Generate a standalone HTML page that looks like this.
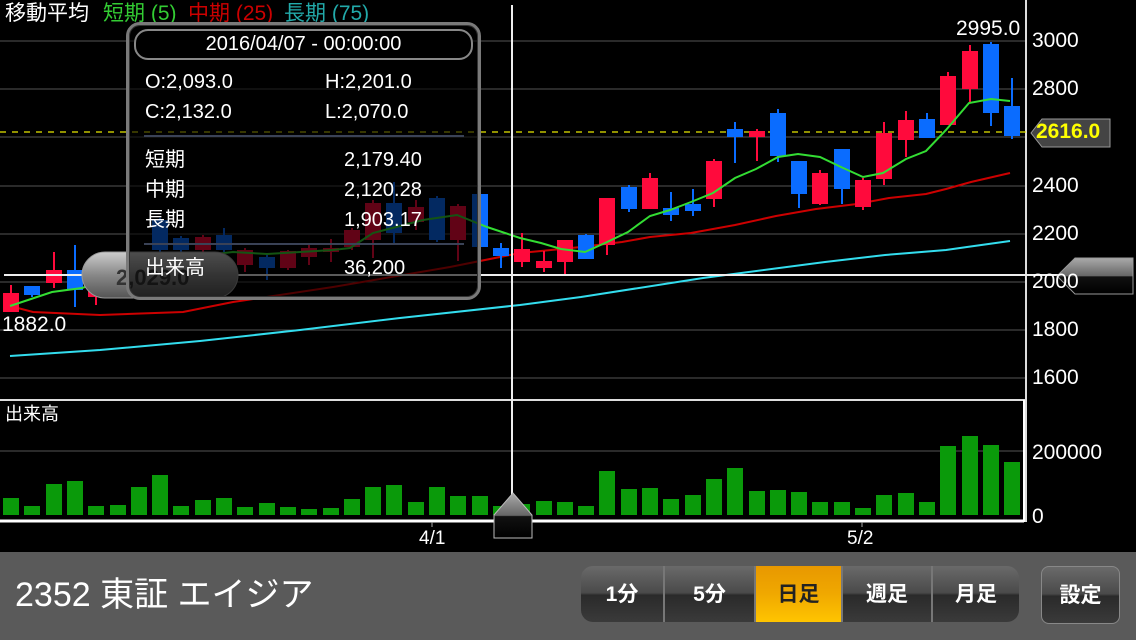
<!DOCTYPE html>
<html><head><meta charset="utf-8"><style>
*{margin:0;padding:0;box-sizing:border-box}
body{width:1136px;height:640px;background:#000;overflow:hidden;position:relative;font-family:"Liberation Sans","Noto Sans CJK JP",sans-serif;color:#fff}
svg{position:absolute;left:0;top:0}
.t{position:absolute;white-space:nowrap;line-height:1}
#ov{position:absolute;left:126px;top:22px;width:355px;height:278px;border-radius:14px;background:rgba(0,0,0,0.62);border:3px solid #7a7a7a;box-shadow:inset 0 0 0 1px #333}
#hd{position:absolute;left:5px;top:4px;width:339px;height:31px;border-radius:14px;background:#000;border:2px solid #888;font-size:20px;text-align:center;line-height:27px}
#ov .t{font-size:20px}
.sep{position:absolute;left:15px;width:320px;height:2px;background:#3a4256}
#bar{position:absolute;left:0;top:552px;width:1136px;height:88px;background:#5a5a5a}
.seg{position:absolute;top:566px;height:56px;background:linear-gradient(#6a6a6a,#4a4a4a 48%,#2a2a2a 52%,#3a3a3a);color:#fff;font-size:21px;font-weight:bold;text-align:center;line-height:58px;border-right:2px solid #777}
.ax{font-size:21px}
</style></head><body>
<svg width="1136" height="640" viewBox="0 0 1136 640">
<g stroke="#555" stroke-width="1">
<line x1="0" y1="41" x2="1026" y2="41"/><line x1="0" y1="89" x2="1026" y2="89"/><line x1="0" y1="137" x2="1026" y2="137"/><line x1="0" y1="186" x2="1026" y2="186"/><line x1="0" y1="234" x2="1026" y2="234"/><line x1="0" y1="282" x2="1026" y2="282"/><line x1="0" y1="330" x2="1026" y2="330"/><line x1="0" y1="378" x2="1026" y2="378"/><line x1="0" y1="451" x2="1026" y2="451"/>
</g>
<line x1="1026" y1="0" x2="1026" y2="522" stroke="#ddd" stroke-width="2"/>
<line x1="0" y1="400" x2="1026" y2="400" stroke="#ddd" stroke-width="2"/>
<polyline fill="none" stroke="#33ddee" stroke-width="2" points="10,356 100,350 200,341 300,330 400,318 520,305 581,297 703,278 825,262 885,255 946,250 967,247 1010,241"/>
<polyline fill="none" stroke="#cc0000" stroke-width="2" points="10,306 33,312 100,315 183,312 233,302 333,287 450,267 520,253 541,251 581,247 622,242 650,237 691,233 735,225 776,216 816,209 857,204 889,198 926,194 946,189 971,182 1010,173"/>
<line x1="0" y1="132" x2="1030" y2="132" stroke="#e8e800" stroke-width="1.2" stroke-dasharray="6,6"/>
<g fill="#ff0a3c">
<rect x="10" y="285" width="2" height="27"/><rect x="3" y="293" width="16" height="19"/>
<rect x="53" y="252" width="2" height="36"/><rect x="46" y="270" width="16" height="13"/>
<rect x="95" y="288" width="2" height="17"/><rect x="88" y="290" width="16" height="7"/>
<rect x="117" y="280" width="2" height="16"/><rect x="110" y="283" width="16" height="10"/>
<rect x="138" y="268" width="2" height="22"/><rect x="131" y="272" width="16" height="13"/>
<rect x="202" y="235" width="2" height="17"/><rect x="195" y="237" width="16" height="13"/>
<rect x="244" y="248" width="2" height="24"/><rect x="237" y="250" width="16" height="15"/>
<rect x="287" y="250" width="2" height="20"/><rect x="280" y="251" width="16" height="17"/>
<rect x="308" y="244" width="2" height="21"/><rect x="301" y="248" width="16" height="9"/>
<rect x="330" y="239" width="2" height="23"/><rect x="323" y="248" width="16" height="4"/>
<rect x="351" y="228" width="2" height="22"/><rect x="344" y="230" width="16" height="17"/>
<rect x="372" y="200" width="2" height="58"/><rect x="365" y="203" width="16" height="37"/>
<rect x="415" y="200" width="2" height="30"/><rect x="408" y="207" width="16" height="15"/>
<rect x="457" y="204" width="2" height="57"/><rect x="450" y="206" width="16" height="34"/>
<rect x="521" y="233" width="2" height="34"/><rect x="514" y="249" width="16" height="13"/>
<rect x="543" y="251" width="2" height="21"/><rect x="536" y="261" width="16" height="7"/>
<rect x="564" y="240" width="2" height="35"/><rect x="557" y="240" width="16" height="22"/>
<rect x="606" y="198" width="2" height="57"/><rect x="599" y="198" width="16" height="47"/>
<rect x="649" y="173" width="2" height="36"/><rect x="642" y="178" width="16" height="31"/>
<rect x="713" y="159" width="2" height="48"/><rect x="706" y="161" width="16" height="38"/>
<rect x="756" y="129" width="2" height="32"/><rect x="749" y="131" width="16" height="6"/>
<rect x="819" y="170" width="2" height="35"/><rect x="812" y="173" width="16" height="31"/>
<rect x="862" y="178" width="2" height="32"/><rect x="855" y="180" width="16" height="27"/>
<rect x="883" y="122" width="2" height="63"/><rect x="876" y="133" width="16" height="46"/>
<rect x="905" y="111" width="2" height="46"/><rect x="898" y="120" width="16" height="20"/>
<rect x="947" y="72" width="2" height="53"/><rect x="940" y="76" width="16" height="49"/>
<rect x="969" y="45" width="2" height="57"/><rect x="962" y="51" width="16" height="38"/>
</g>
<g fill="#0a6cff">
<rect x="31" y="286" width="2" height="11"/><rect x="24" y="286" width="16" height="9"/>
<rect x="74" y="245" width="2" height="62"/><rect x="67" y="270" width="16" height="20"/>
<rect x="159" y="218" width="2" height="34"/><rect x="152" y="220" width="16" height="30"/>
<rect x="180" y="236" width="2" height="16"/><rect x="173" y="238" width="16" height="12"/>
<rect x="223" y="228" width="2" height="24"/><rect x="216" y="235" width="16" height="15"/>
<rect x="266" y="255" width="2" height="25"/><rect x="259" y="257" width="16" height="11"/>
<rect x="393" y="182" width="2" height="63"/><rect x="386" y="203" width="16" height="30"/>
<rect x="436" y="196" width="2" height="46"/><rect x="429" y="198" width="16" height="42"/>
<rect x="479" y="194" width="2" height="53"/><rect x="472" y="194" width="16" height="53"/>
<rect x="500" y="243" width="2" height="25"/><rect x="493" y="248" width="16" height="8"/>
<rect x="585" y="234" width="2" height="25"/><rect x="578" y="235" width="16" height="24"/>
<rect x="628" y="185" width="2" height="27"/><rect x="621" y="187" width="16" height="22"/>
<rect x="670" y="192" width="2" height="29"/><rect x="663" y="208" width="16" height="7"/>
<rect x="692" y="189" width="2" height="27"/><rect x="685" y="204" width="16" height="7"/>
<rect x="734" y="122" width="2" height="41"/><rect x="727" y="129" width="16" height="8"/>
<rect x="777" y="109" width="2" height="53"/><rect x="770" y="113" width="16" height="43"/>
<rect x="798" y="161" width="2" height="47"/><rect x="791" y="161" width="16" height="33"/>
<rect x="841" y="149" width="2" height="55"/><rect x="834" y="149" width="16" height="40"/>
<rect x="926" y="113" width="2" height="25"/><rect x="919" y="119" width="16" height="19"/>
<rect x="990" y="42" width="2" height="84"/><rect x="983" y="44" width="16" height="69"/>
<rect x="1011" y="78" width="2" height="61"/><rect x="1004" y="106" width="16" height="30"/>
</g>
<polyline fill="none" stroke="#33dd33" stroke-width="2" points="10,306 52,292 82,288 130,272 180,258 233,252 267,254 333,250 350,248 373,233 423,220 457,215 487,227 520,238 541,243 561,249 585,252 605,243 628,232 650,216 670,210 691,202 713,193 735,178 756,169 778,157 798,154 820,157 841,167 863,177 883,173 906,159 926,151 946,130 969,103 991,99 1010,101"/>
<g fill="#0a9a0a">
<rect x="3" y="498" width="16" height="17"/><rect x="24" y="506" width="16" height="9"/><rect x="46" y="484" width="16" height="31"/><rect x="67" y="481" width="16" height="34"/><rect x="88" y="506" width="16" height="9"/><rect x="110" y="505" width="16" height="10"/><rect x="131" y="487" width="16" height="28"/><rect x="152" y="475" width="16" height="40"/><rect x="173" y="506" width="16" height="9"/><rect x="195" y="500" width="16" height="15"/><rect x="216" y="498" width="16" height="17"/><rect x="237" y="507" width="16" height="8"/><rect x="259" y="503" width="16" height="12"/><rect x="280" y="507" width="16" height="8"/><rect x="301" y="509" width="16" height="6"/><rect x="323" y="508" width="16" height="7"/><rect x="344" y="499" width="16" height="16"/><rect x="365" y="487" width="16" height="28"/><rect x="386" y="485" width="16" height="30"/><rect x="408" y="502" width="16" height="13"/><rect x="429" y="487" width="16" height="28"/><rect x="450" y="496" width="16" height="19"/><rect x="472" y="496" width="16" height="19"/><rect x="493" y="506" width="16" height="9"/><rect x="514" y="504" width="16" height="11"/><rect x="536" y="501" width="16" height="14"/><rect x="557" y="502" width="16" height="13"/><rect x="578" y="506" width="16" height="9"/><rect x="599" y="471" width="16" height="44"/><rect x="621" y="489" width="16" height="26"/><rect x="642" y="488" width="16" height="27"/><rect x="663" y="499" width="16" height="16"/><rect x="685" y="495" width="16" height="20"/><rect x="706" y="479" width="16" height="36"/><rect x="727" y="468" width="16" height="47"/><rect x="749" y="491" width="16" height="24"/><rect x="770" y="490" width="16" height="25"/><rect x="791" y="492" width="16" height="23"/><rect x="812" y="502" width="16" height="13"/><rect x="834" y="502" width="16" height="13"/><rect x="855" y="508" width="16" height="7"/><rect x="876" y="495" width="16" height="20"/><rect x="898" y="493" width="16" height="22"/><rect x="919" y="502" width="16" height="13"/><rect x="940" y="446" width="16" height="69"/><rect x="962" y="436" width="16" height="79"/><rect x="983" y="445" width="16" height="70"/><rect x="1004" y="462" width="16" height="53"/>
</g>
<line x1="0" y1="521" x2="1024" y2="521" stroke="#fff" stroke-width="3"/>
<line x1="1024" y1="400" x2="1024" y2="522" stroke="#fff" stroke-width="2"/>
<line x1="432" y1="522" x2="432" y2="527" stroke="#aaa"/><line x1="862" y1="522" x2="862" y2="527" stroke="#aaa"/>
<line x1="512" y1="5" x2="512" y2="495" stroke="#eee" stroke-width="2"/>
<line x1="4" y1="275" x2="1132" y2="275" stroke="#eee" stroke-width="2"/>
<defs><linearGradient id="gg" x1="0" y1="0" x2="0" y2="1"><stop offset="0" stop-color="#ccc"/><stop offset="0.5" stop-color="#888"/><stop offset="1" stop-color="#555"/></linearGradient>
<linearGradient id="gr" x1="0" y1="0" x2="0" y2="1"><stop offset="0" stop-color="#aaa"/><stop offset="0.5" stop-color="#666"/><stop offset="0.52" stop-color="#111"/><stop offset="1" stop-color="#000"/></linearGradient></defs>
<rect x="82" y="252" width="156" height="46" rx="23" fill="url(#gg)" stroke="#999"/>
<text x="116" y="285" font-family="Liberation Sans" font-size="22" font-weight="bold" fill="#333">2,029.0</text>
<path d="M1057,276 L1075,258 L1133,258 L1133,294 L1075,294 Z" fill="url(#gr)" stroke="#999"/>
<path d="M494,515 L513,493 L532,515 L532,538 L494,538 Z" fill="url(#gr)" stroke="#bbb"/>
<path d="M1031,133 L1042,119 L1110,119 L1110,147 L1042,147 Z" fill="#444" stroke="#999"/>
</svg>
<div class="t" style="left:5px;top:3px;font-size:21px">移動平均</div>
<div class="t" style="left:103px;top:3px;font-size:21px;color:#3c3">短期 (5)</div>
<div class="t" style="left:188px;top:3px;font-size:21px;color:#c00">中期 (25)</div>
<div class="t" style="left:284px;top:3px;font-size:21px;color:#2aa">長期 (75)</div>
<div class="t ax" style="left:956px;top:18px">2995.0</div>
<div class="t ax" style="left:2px;top:314px">1882.0</div>
<div class="t ax" style="left:1032px;top:30px">3000</div>
<div class="t ax" style="left:1032px;top:78px">2800</div>
<div class="t ax" style="left:1032px;top:175px">2400</div>
<div class="t ax" style="left:1032px;top:223px">2200</div>
<div class="t ax" style="left:1032px;top:271px">2000</div>
<div class="t ax" style="left:1032px;top:319px">1800</div>
<div class="t ax" style="left:1032px;top:367px">1600</div>
<div class="t" style="left:1036px;top:121px;font-size:21px;font-weight:bold;color:#ff0">2616.0</div>
<div class="t" style="left:5px;top:405px;font-size:18px">出来高</div>
<div class="t ax" style="left:1032px;top:442px">200000</div>
<div class="t ax" style="left:1032px;top:506px">0</div>
<div class="t" style="left:419px;top:529px;font-size:19px">4/1</div>
<div class="t" style="left:847px;top:529px;font-size:19px">5/2</div>
<div id="ov">
<div id="hd">2016/04/07 - 00:00:00</div>
<div class="t" style="left:16px;top:47px">O:2,093.0</div>
<div class="t" style="left:196px;top:47px">H:2,201.0</div>
<div class="t" style="left:16px;top:77px">C:2,132.0</div>
<div class="t" style="left:196px;top:77px">L:2,070.0</div>
<div class="sep" style="top:110px"></div>
<div class="t" style="left:16px;top:125px">短期</div><div class="t" style="left:215px;top:125px">2,179.40</div>
<div class="t" style="left:16px;top:155px">中期</div><div class="t" style="left:215px;top:155px">2,120.28</div>
<div class="t" style="left:16px;top:185px">長期</div><div class="t" style="left:215px;top:185px">1,903.17</div>
<div class="sep" style="top:218px"></div>
<div class="t" style="left:16px;top:233px">出来高</div><div class="t" style="left:215px;top:233px">36,200</div>
</div>
<div id="bar"></div>
<div class="t" style="left:15px;top:578px;font-size:34px">2352 東証 エイジア</div>
<div class="seg" style="left:581px;width:84px;border-radius:12px 0 0 12px">1分</div>
<div class="seg" style="left:665px;width:91px">5分</div>
<div class="seg" style="left:756px;width:87px;background:linear-gradient(#e89800,#f0a800 50%,#ffc400);color:#222">日足</div>
<div class="seg" style="left:843px;width:90px">週足</div>
<div class="seg" style="left:933px;width:86px;border-radius:0 12px 12px 0;border-right:none">月足</div>
<div class="seg" style="left:1041px;width:79px;height:58px;border-radius:8px;border:1px solid #888">設定</div>
</body></html>
